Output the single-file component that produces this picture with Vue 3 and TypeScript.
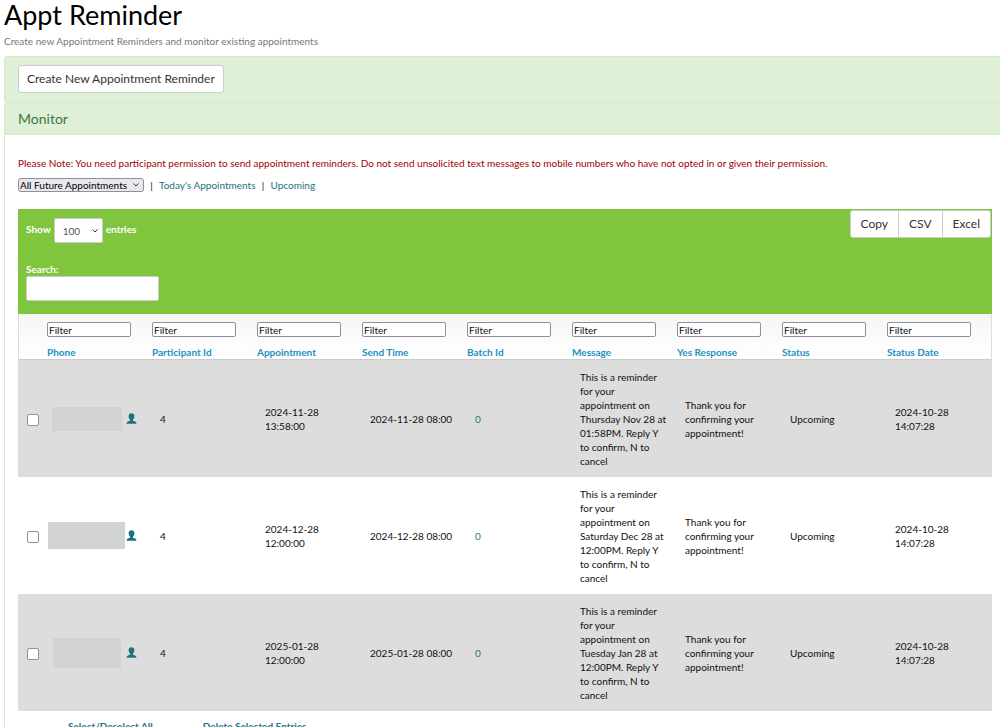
<script setup lang="ts">
import { ref } from 'vue'

interface Appointment {
  id: number
  participant: number
  appointment: string
  sendTime: string
  batch: number
  message: string
  yesResponse: string
  status: string
  statusDate: string
  mask: string
}

const columns = [
  'Phone',
  'Participant Id',
  'Appointment',
  'Send Time',
  'Batch Id',
  'Message',
  'Yes Response',
  'Status',
  'Status Date',
]

const shared = {
  participant: 4,
  batch: 0,
  yesResponse: 'Thank you for confirming your appointment!',
  status: 'Upcoming',
  statusDate: '2024-10-28 14:07:28',
}

const rows: Appointment[] = [
  {
    ...shared,
    id: 1,
    appointment: '2024-11-28 13:58:00',
    sendTime: '2024-11-28 08:00',
    message:
      'This is a reminder for your appointment on Thursday Nov 28 at 01:58PM. Reply Y to confirm, N to cancel',
    mask: 'mask-small',
  },
  {
    ...shared,
    id: 2,
    appointment: '2024-12-28 12:00:00',
    sendTime: '2024-12-28 08:00',
    message:
      'This is a reminder for your appointment on Saturday Dec 28 at 12:00PM. Reply Y to confirm, N to cancel',
    mask: 'mask-wide',
  },
  {
    ...shared,
    id: 3,
    appointment: '2025-01-28 12:00:00',
    sendTime: '2025-01-28 08:00',
    message:
      'This is a reminder for your appointment on Tuesday Jan 28 at 12:00PM. Reply Y to confirm, N to cancel',
    mask: 'mask-tall',
  },
]

const range = ref('All Future Appointments')
const pageLength = ref('100')
const search = ref('')
const filters = ref<string[]>(columns.map(() => ''))
const selected = ref<number[]>([])

function toggleAll() {
  selected.value = selected.value.length === rows.length ? [] : rows.map((r) => r.id)
}
</script>

<template>
  <main class="page">
    <h1>Appt Reminder</h1>
    <p class="subtitle">Create new Appointment Reminders and monitor existing appointments</p>

    <section class="panel create-panel">
      <button type="button" class="btn">Create New Appointment Reminder</button>
    </section>

    <section class="panel">
      <h2>Monitor</h2>
      <div class="panel-body">
        <p class="note">
          Please Note: You need participant permission to send appointment reminders. Do not send
          unsolicited text messages to mobile numbers who have not opted in or given their permission.
        </p>

        <nav class="ranges">
          <span class="select-wrap">
            <select v-model="range" class="range-select" aria-label="Appointment range">
              <option>All Future Appointments</option>
              <option>All Past Appointments</option>
            </select>
            <svg class="chevron" viewBox="0 0 8 6" aria-hidden="true"><path d="M1.5 1.5 4 4l2.500-2.500" /></svg>
          </span>
          <span class="bar">|</span>
          <a href="#today">Today's Appointments</a>
          <span class="bar">|</span>
          <a href="#upcoming">Upcoming</a>
        </nav>

        <div class="toolbar">
          <div class="controls">
            <div class="length">
              <label for="length">Show</label>
              <span class="select-wrap">
                <select id="length" v-model="pageLength" class="length-select">
                  <option>25</option>
                  <option>50</option>
                  <option>100</option>
                </select>
                <svg class="chevron" viewBox="0 0 8 6" aria-hidden="true"><path d="M1.5 1.5 4 4l2.500-2.500" /></svg>
              </span>
              <span>entries</span>
            </div>
            <div class="search">
              <label for="search">Search:</label>
              <input id="search" v-model="search" type="text" />
            </div>
          </div>
          <div class="exports">
            <button type="button">Copy</button>
            <button type="button">CSV</button>
            <button type="button">Excel</button>
          </div>
        </div>

        <table>
          <colgroup>
            <col class="check-col" />
            <col v-for="c in columns" :key="c" />
          </colgroup>
          <thead>
            <tr>
              <th></th>
              <th v-for="(c, i) in columns" :key="c" scope="col">
                <input v-model="filters[i]" type="text" placeholder="Filter" :aria-label="c + ' filter'" />
                <span>{{ c }}</span>
              </th>
            </tr>
          </thead>
          <tbody>
            <tr v-for="row in rows" :key="row.id">
              <td class="check">
                <input v-model="selected" type="checkbox" :value="row.id" :aria-label="'Select entry ' + row.id" />
              </td>
              <td class="phone">
                <div class="phone-cell">
                  <span class="mask-slot"><span class="mask" :class="row.mask"></span></span>
                  <a href="#participant" aria-label="Participant">
                    <svg viewBox="0 0 10 11" aria-hidden="true">
                      <path d="M5 .2C3.200.2 2.100 1.400 2.100 3.100c0 1.600.6 2.900 1.500 3.700v1C2.300 8.300.1 8.600.1 10.200v.6h9.800v-.6C9.900 8.600 7.700 8.300 6.400 7.800v-1c.9-.8 1.500-2.100 1.500-3.700C7.900 1.400 6.800.2 5 .2Z" />
                    </svg>
                  </a>
                </div>
              </td>
              <td>{{ row.participant }}</td>
              <td>{{ row.appointment }}</td>
              <td class="nowrap">{{ row.sendTime }}</td>
              <td><a href="#batch">{{ row.batch }}</a></td>
              <td>{{ row.message }}</td>
              <td>{{ row.yesResponse }}</td>
              <td>{{ row.status }}</td>
              <td>{{ row.statusDate }}</td>
            </tr>
          </tbody>
        </table>

        <div class="actions">
          <a href="#select" @click.prevent="toggleAll">Select/Deselect All</a>
          <a href="#delete">Delete Selected Entries</a>
        </div>
      </div>
    </section>
  </main>
</template>

<style>
html {
  scrollbar-width: none;
}
body {
  background: #fff;
}
</style>

<style scoped>
.page {
  padding-left: 4px;
  font: 10px/14px Lato, "Liberation Sans", sans-serif;
  color: #111;
}
.page *,
.page {
  box-sizing: border-box;
}
h1 {
  margin: 0;
  font-size: 27px;
  line-height: 30px;
  font-weight: 400;
  color: #000;
}
.subtitle {
  margin: 4px 0 8px;
  color: #777;
}
a {
  color: #1a7480;
  text-decoration: none;
}
button,
input,
select {
  font: inherit;
  color: inherit;
  margin: 0;
}
.panel {
  border: 1px solid #d6e9c6;
  border-right: 0;
  border-radius: 4px 0 0 0;
}
.create-panel {
  background: #dff0d8;
  border-bottom: 0;
  padding: 8px 13px 9px;
}
.btn {
  display: block;
  height: 28px;
  padding: 0 8px;
  background: #fff;
  border: 1px solid #ccc;
  border-radius: 3px;
  font-size: 12px;
  color: #333;
}
h2 {
  margin: 0;
  padding: 0 13px;
  height: 32px;
  font-size: 14px;
  line-height: 32px;
  font-weight: 400;
  color: #3c763d;
  background: #dff0d8;
  border-bottom: 1px solid #d6e9c6;
}
.panel-body {
  padding: 21px 8px 0 13px;
}
.note {
  margin: 0;
  color: #a00000;
}
.ranges {
  display: flex;
  align-items: center;
  margin: 8px 0 17px;
}
.bar {
  width: 15px;
  text-align: center;
}
.select-wrap {
  position: relative;
  display: inline-flex;
}
.chevron {
  position: absolute;
  right: 4px;
  top: 50%;
  width: 8px;
  height: 6px;
  margin-top: -3px;
  fill: none;
  stroke: #333;
  pointer-events: none;
}
select {
  appearance: none;
  cursor: pointer;
}
.range-select {
  width: 126px;
  height: 14px;
  padding: 0 0 0 1px;
  line-height: 12px;
  border: 1px solid #8f8f9d;
  border-radius: 3px;
  background: #e9e9ed;
  color: #000;
}
.toolbar {
  display: flex;
  justify-content: space-between;
  align-items: flex-start;
  background: #7fc53e;
  color: #fff;
  font-weight: 700;
  padding: 1px 1px 13px 8px;
}
.length {
  display: flex;
  align-items: flex-start;
  gap: 3px;
  padding-top: 8px;
  line-height: 22px;
}
.length-select {
  width: 49px;
  height: 25px;
  padding: 0 8px;
  border: 1px solid #ccc;
  border-radius: 2px;
  background: #fff;
  font-weight: 400;
  color: #555;
}
.search {
  margin-top: 19px;
}
.search label {
  display: block;
}
.search input {
  display: block;
  width: 133px;
  height: 25px;
  padding: 0 8px;
  border: 1px solid #ccc;
  border-radius: 2px;
  background: #fff;
  color: #555;
}
.exports {
  display: flex;
}
.exports button {
  height: 28px;
  padding: 0 10px;
  background: #fff;
  border: 1px solid #ccc;
  font-size: 12px;
  font-weight: 400;
  color: #333;
}
.exports button + button {
  margin-left: -1px;
}
.exports button:first-child {
  border-radius: 3px 0 0 3px;
}
.exports button:last-child {
  border-radius: 0 3px 3px 0;
}
table {
  width: 100%;
  table-layout: fixed;
  border-collapse: separate;
  border-spacing: 0;
}
.check-col {
  width: 29px;
}
thead tr {
  background: linear-gradient(#f6f6f6, #fff);
}
th {
  height: 46px;
  padding: 8px 0 0;
  text-align: left;
  vertical-align: top;
  color: #2191c0;
  border-bottom: 1px solid #ccc;
}
th:first-child {
  border-left: 1px solid #ddd;
}
th:last-child {
  border-right: 1px solid #ddd;
}
th input {
  display: block;
  width: 84px;
  height: 15px;
  padding: 0 1px;
  border: 1px solid #8f8f9d;
  border-radius: 2px;
  background: #fff;
  font-weight: 400;
  color: #111;
}
th input::placeholder {
  color: #111;
  opacity: 1;
}
th span {
  display: block;
  margin-top: 8px;
}
td {
  height: 117px;
  padding: 8px;
  vertical-align: middle;
}
tbody tr:nth-child(odd) {
  background: #ddd;
}
td.check {
  padding-left: 9px;
}
.check input {
  display: block;
  appearance: none;
  width: 12px;
  height: 12px;
  margin-top: 2px;
  border: 1px solid #8f8f9d;
  border-radius: 2px;
  background: #fff;
}
.check input:checked {
  background: #1a7480;
}
td.phone {
  padding-left: 0;
  padding-right: 0;
}
.phone-cell {
  display: flex;
  align-items: center;
}
.mask-slot {
  display: flex;
  justify-content: center;
  width: 79px;
}
.mask {
  background: #d1d3d4;
}
.mask-small {
  width: 70px;
  height: 24px;
}
.mask-wide {
  width: 77px;
  height: 27px;
}
.mask-tall {
  width: 68px;
  height: 30px;
}
.phone svg {
  display: block;
  width: 11px;
  height: 11px;
  fill: currentColor;
}
.nowrap {
  white-space: nowrap;
}
.actions {
  display: flex;
  gap: 50px;
  padding: 8px 50px;
  font-weight: 700;
}
</style>
